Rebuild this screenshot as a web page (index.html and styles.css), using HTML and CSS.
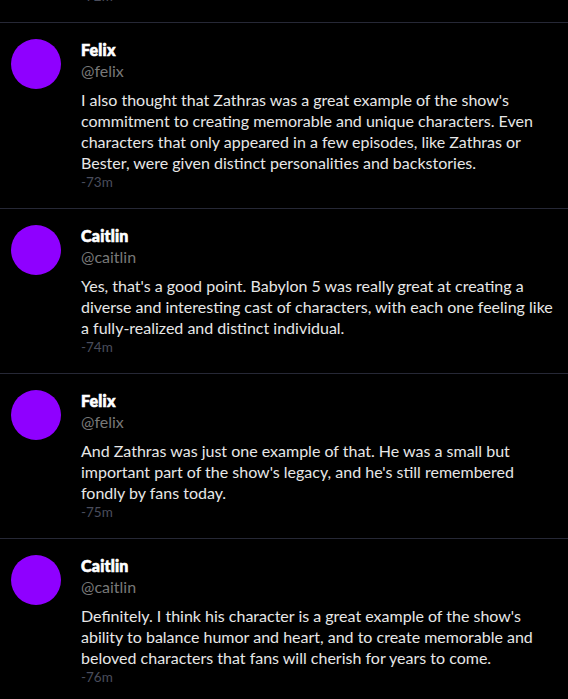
FILE: index.html
```html
<!DOCTYPE html>
<html lang="en">
<head>
<meta charset="utf-8">
<title>Thread</title>
<link rel="stylesheet" href="styles.css">
</head>
<body>
<main class="feed">
  <article class="post post-partial">
    <div class="avatar-space"></div>
    <div class="content">
      <div class="time">-72m</div>
    </div>
  </article>
  <article class="post">
    <div class="avatar"></div>
    <div class="content">
      <div class="name">Felix</div>
      <div class="handle">@felix</div>
      <p class="text">I also thought that Zathras was a great example of the show's commitment to creating memorable and unique characters. Even characters that only appeared in a few episodes, like Zathras or Bester, were given distinct personalities and backstories.</p>
      <div class="time">-73m</div>
    </div>
  </article>
  <article class="post">
    <div class="avatar"></div>
    <div class="content">
      <div class="name">Caitlin</div>
      <div class="handle">@caitlin</div>
      <p class="text">Yes, that's a good point. Babylon 5 was really great at creating a diverse and interesting cast of characters, with each one feeling like a fully-realized and distinct individual.</p>
      <div class="time">-74m</div>
    </div>
  </article>
  <article class="post">
    <div class="avatar"></div>
    <div class="content">
      <div class="name">Felix</div>
      <div class="handle">@felix</div>
      <p class="text">And Zathras was just one example of that. He was a small but important part of the show's legacy, and he's still remembered fondly by fans today.</p>
      <div class="time">-75m</div>
    </div>
  </article>
  <article class="post">
    <div class="avatar"></div>
    <div class="content">
      <div class="name">Caitlin</div>
      <div class="handle">@caitlin</div>
      <p class="text">Definitely. I think his character is a great example of the show's ability to balance humor and heart, and to create memorable and beloved characters that fans will cherish for years to come.</p>
      <div class="time">-76m</div>
    </div>
  </article>
</main>
</body>
</html>
```
FILE: styles.css
```css
html, body {
  margin: 0;
  padding: 0;
  background: #000;
}
body {
  font-family: "Segoe UI", Lato, "Noto Sans", sans-serif;
  font-size: 16px;
  color: #e7e7e7;
  overflow: hidden;
}
.feed {
  margin-top: -13px;
}
.post {
  display: flex;
  gap: 20px;
  padding: 16px 8px 16px 11px;
  border-bottom: 1px solid #262836;
}
.avatar, .avatar-space {
  flex: 0 0 50px;
  width: 50px;
  height: 50px;
  border-radius: 50%;
  background: #8f00ff;
}
.avatar-space {
  height: 0;
  background: none;
}
.post-partial {
  padding-top: 0;
}
.content {
  flex: 1;
  min-width: 0;
}
.name {
  font-weight: 900;
  line-height: 21px;
  color: #fff;
  -webkit-text-stroke: 0.6px #fff;
  letter-spacing: 0.2px;
}
.handle {
  line-height: 21px;
  color: #787878;
}
.text {
  margin: 8px 0 0;
  line-height: 21px;
  color: #e7e7e7;
}
.time {
  font-size: 13.5px;
  line-height: 19px;
  color: #4a4d5c;
}
```
